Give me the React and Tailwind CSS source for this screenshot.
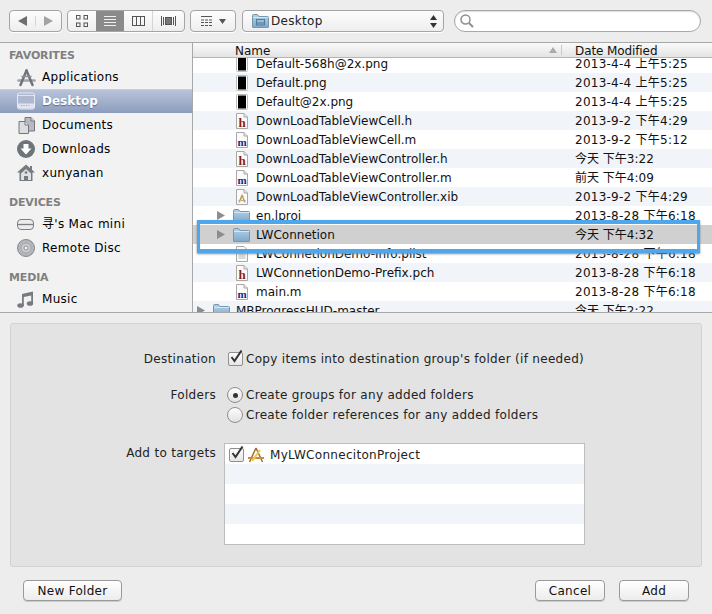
import React from "react";

const FONT = "font-['DejaVu_Sans','Noto_Sans_CJK_SC',sans-serif]";

function Folder({ className = "", glyph }) {
  return (
    <svg width="17" height="14" viewBox="0 0 17 14" className={className}>
      <defs>
        <linearGradient id="fg" x1="0" y1="0" x2="0" y2="1">
          <stop offset="0" stopColor="#b4d0e6" />
          <stop offset="1" stopColor="#7ea9cb" />
        </linearGradient>
      </defs>
      <path d="M.5 13V1.500a1 1 0 0 1 1-1h4l1.500 2h8.500a1 1 0 0 1 1 1V13a.5.5 0 0 1-.5.5H1a.5.5 0 0 1-.5-.5z" fill="url(#fg)" stroke="#7696ae" />
      <path d="M1 3.500h15" stroke="#d6e6f2" />
      {glyph && <rect x="4.500" y="5.500" width="8" height="5.500" fill="none" stroke="#527a9b" />}
      {glyph && <path d="M5 9h7" stroke="#527a9b" />}
    </svg>
  );
}

function Tri({ className = "" }) {
  return (
    <svg width="8" height="9" viewBox="0 0 8 9" className={className}>
      <path d="M0 0l8 4.500L0 9z" fill="#8c8c8c" />
    </svg>
  );
}

function PngIcon() {
  return (
    <svg width="12" height="16" viewBox="0 0 12 16">
      <rect x=".5" y=".5" width="11" height="15" rx="1" fill="#fff" stroke="#bbb" />
      <rect x="2" y="1.500" width="8" height="13" fill="#000" />
    </svg>
  );
}

function CodeIcon({ letter, color }) {
  return (
    <svg width="12" height="16" viewBox="0 0 12 16">
      <path d="M.5.500h7.500l3.500 3.500v11.500h-11z" fill="#fbfbfb" stroke="#a8a8a8" />
      <path d="M8 .5v3.500h3.500" fill="#e4e4e4" stroke="#a8a8a8" />
      <text x="6" y="13.500" textAnchor="middle" fontSize={letter === "m" ? "11" : "13"} fontWeight="700" fontFamily="'Liberation Serif',serif" fill={color}>{letter}</text>
    </svg>
  );
}

function XibIcon() {
  return (
    <svg width="12" height="16" viewBox="0 0 12 16">
      <path d="M.5.500h7.500l3.500 3.500v11.500h-11z" fill="#fbfbfb" stroke="#a8a8a8" />
      <path d="M8 .5v3.500h3.500" fill="#e4e4e4" stroke="#a8a8a8" />
      <path d="M3 13.500l3-7 3 7" fill="none" stroke="#b9905a" strokeWidth="1.300" />
      <path d="M2.500 11.500h7" stroke="#9ba8bd" />
      <path d="M3.500 13L8 7" stroke="#e7c65e" />
    </svg>
  );
}

function PlistIcon() {
  return (
    <svg width="12" height="16" viewBox="0 0 12 16">
      <path d="M.5.500h7.500l3.500 3.500v11.500h-11z" fill="#fbfbfb" stroke="#a8a8a8" />
      <path d="M2.500 6h7M2.500 8h7M2.500 10h7M2.500 12h7" stroke="#b5b5b5" />
    </svg>
  );
}

function Row({ icon, name, date, shade, indent = "pl-[43px]", textGap = "ml-[8px]", tri }) {
  return (
    <div className={`flex h-[19px] shrink-0 items-center ${shade ? "bg-[#f1f4f9]" : ""}`}>
      <div className="flex w-[382px] items-center">
        {tri ? (
          <div className={`flex items-center ${indent}`}>
            <Tri />
            <Folder className="ml-[8px]" />
          </div>
        ) : (
          <div className={`flex items-center ${indent}`}>{icon}</div>
        )}
        <span className={`${textGap} whitespace-nowrap`}>{name}</span>
      </div>
      <span className={`whitespace-nowrap ${date.startsWith("2013") ? "tracking-[0.25px]" : ""}`}>{date}</span>
    </div>
  );
}

function SideLabel({ children, className = "" }) {
  return <div className={`pl-[9px] text-[11px] font-bold leading-[14px] tracking-[-0.15px] text-[#808080] ${className}`}>{children}</div>;
}

function SideItem({ icon, children, active }) {
  return (
    <div
      className={`flex h-[24px] items-center pl-[17px] ${
        active
          ? "bg-linear-to-b from-[#bac5db] to-[#8c9dbd] font-bold text-white shadow-[inset_0_1px_0_#c3cde0] [text-shadow:0_1px_1px_#5d6d8c]"
          : "tracking-[0.3px] text-black"
      }`}
    >
      <div className="flex w-[25px] items-center">{icon}</div>
      <span className="whitespace-nowrap">{children}</span>
    </div>
  );
}

const ICONS = {
  apps: (
    <svg width="19" height="19" viewBox="0 0 19 19" fill="none" strokeLinecap="round">
      <path d="M1.500 12.500h16" stroke="#a0a3a8" strokeWidth="2.500" />
      <path d="M9.500 2.500L3.500 17" stroke="#70747a" strokeWidth="2.500" />
      <path d="M9.500 2.500l6 14.500" stroke="#70747a" strokeWidth="2.500" />
      <path d="M5 8.500h9" stroke="#8d9096" strokeWidth="1.500" />
    </svg>
  ),
  desk: (
    <svg width="18" height="18" viewBox="0 0 18 18">
      <rect x=".5" y="1" width="17" height="16" rx="2" fill="#aeb9d1" stroke="#e6eaf2" />
      <path d="M1 3.500h16" stroke="#dfe4ee" />
      <rect x="1" y="11.500" width="16" height="5" fill="#dfe4ee" />
      <path d="M4 13.500h1M6.500 13.500h1M9 13.500h1M11.500 13.500h1" stroke="#8c9dbd" />
    </svg>
  ),
  docs: (
    <svg width="19" height="19" viewBox="0 0 19 19">
      <path d="M8 1.500h6l3.500 3.500v10H8z" fill="#b8babf" stroke="#73767c" />
      <path d="M14 1.500V5h3.500" fill="#dcdde0" stroke="#73767c" />
      <path d="M2 5.500h6l3.500 3.500v8.500H2z" fill="#dcdde0" stroke="#73767c" />
      <path d="M8 5.500V9h3.500" fill="#f4f4f5" stroke="#73767c" />
    </svg>
  ),
  down: (
    <svg width="18" height="18" viewBox="0 0 18 18">
      <circle cx="9" cy="9" r="9" fill="#6f737a" />
      <path d="M6.500 4h5v4.500H14.500L9 14.500 3.500 8.500h3z" fill="#fff" />
    </svg>
  ),
  home: (
    <svg width="18" height="18" viewBox="0 0 18 18">
      <path d="M9 .500L0 8.500h2.500V17h13V8.500H18l-3-2.700V2h-2v2z" fill="#777b81" />
      <path d="M4 9.500L9 5l5 4.500V16h-3v-4H7v4H4z" fill="#dfe0e2" />
      <rect x="7.500" y="12" width="3" height="4" fill="#777b81" />
      <circle cx="9" cy="8.500" r="1.300" fill="#777b81" />
    </svg>
  ),
  mini: (
    <svg width="17" height="11" viewBox="0 0 17 11">
      <rect x=".5" y=".5" width="16" height="10" rx="3.500" fill="#ececec" stroke="#7c7f84" />
      <path d="M1 5.500h15" stroke="#7c7f84" strokeWidth="1.300" />
    </svg>
  ),
  disc: (
    <svg width="18" height="18" viewBox="0 0 18 18">
      <circle cx="9" cy="9" r="8.500" fill="#b4b6ba" stroke="#85888d" />
      <circle cx="9" cy="9" r="5" fill="#c9cbce" stroke="#a4a6aa" />
      <circle cx="9" cy="9" r="2" fill="#f3f3f3" stroke="#8f9196" />
    </svg>
  ),
  music: (
    <svg width="17" height="17" viewBox="0 0 17 17">
      <path d="M5 3l11-2.500v12h-1.800V4.400L6.800 6v9H5z" fill="#777b81" />
      <ellipse cx="3.500" cy="14.500" rx="3.200" ry="2.300" fill="#777b81" />
      <ellipse cx="13" cy="12.500" rx="3.200" ry="2.300" fill="#777b81" />
    </svg>
  ),
};

const btn = "rounded-[4px] border border-[#a5a5a5] bg-linear-to-b from-[#fdfdfd] to-[#eeeeee] shadow-[0_1px_0_#ffffff]";

function Toolbar() {
  return (
    <div className="flex h-[42px] shrink-0 items-start bg-[#ededed] pl-[9px] pt-[10px]">
      <div className={`flex h-[22px] w-[53px] items-center ${btn}`}>
        <div className="flex w-[26px] justify-center border-r border-[#d5d5d5]">
          <svg width="9" height="10" viewBox="0 0 9 10"><path d="M9 0v10L0 5z" fill="#6e6e6e" /></svg>
        </div>
        <div className="flex flex-1 justify-center">
          <svg width="9" height="10" viewBox="0 0 9 10"><path d="M0 0v10l9-5z" fill="#a3a3a3" /></svg>
        </div>
      </div>
      <div className={`ml-[5px] flex h-[22px] w-[118px] items-center overflow-hidden ${btn}`}>
        <div className="flex h-full w-[28px] items-center justify-center">
          <svg width="12" height="12" viewBox="0 0 12 12" fill="none" stroke="#555">
            <rect x=".5" y=".5" width="3.500" height="3.500" /><rect x="8" y=".5" width="3.500" height="3.500" />
            <rect x=".5" y="8" width="3.500" height="3.500" /><rect x="8" y="8" width="3.500" height="3.500" />
          </svg>
        </div>
        <div className="flex h-full w-[28px] items-center justify-center bg-[#8a8a8a]">
          <svg width="12" height="11" viewBox="0 0 12 11" stroke="#f0f0f0">
            <path d="M0 .5h12M0 3.500h12M0 6.500h12M0 9.500h12" />
          </svg>
        </div>
        <div className="flex h-full w-[28px] items-center justify-center">
          <svg width="13" height="10" viewBox="0 0 13 10" fill="none" stroke="#555">
            <rect x=".5" y=".5" width="12" height="9" /><path d="M4.500 0v10M8.500 0v10" />
          </svg>
        </div>
        <div className="flex h-full flex-1 items-center justify-center border-l border-[#d5d5d5]">
          <svg width="15" height="10" viewBox="0 0 15 10">
            <path d="M.5 0v10M2.500 1v8M12.500 1v8M14.500 0v10" stroke="#555" />
            <rect x="4.500" y="1.500" width="6" height="7" fill="#777" stroke="#555" />
          </svg>
        </div>
      </div>
      <div className={`ml-[5px] flex h-[22px] w-[46px] items-center justify-center gap-[7px] ${btn}`}>
        <svg width="11" height="10" viewBox="0 0 11 10" stroke="#555">
          <path d="M0 .5h11" /><path d="M0 4h3M4 4h3M8 4h3M0 6.500h3M4 6.500h3M8 6.500h3M0 9.500h3M4 9.500h3M8 9.500h3" />
        </svg>
        <svg width="7" height="5" viewBox="0 0 7 5"><path d="M0 0h7L3.500 5z" fill="#555" /></svg>
      </div>
      <div className={`ml-[6px] flex h-[22px] w-[202px] items-center pl-[9px] ${btn}`}>
        <Folder glyph />
        <span className="ml-[2px] text-[12px] tracking-[0.3px] text-[#222]">Desktop</span>
        <svg width="7" height="13" viewBox="0 0 7 13" className="ml-auto mr-[6px]">
          <path d="M3.500 0L7 5H0zM0 8h7l-3.500 5z" fill="#333" />
        </svg>
      </div>
      <div className="ml-[10px] flex h-[22px] w-[247px] items-center rounded-full border border-[#a8a8a8] bg-white pl-[5px] shadow-[inset_0_1px_1px_#dddddd]">
        <svg width="14" height="14" viewBox="0 0 14 14" fill="none" stroke="#8f8f8f" strokeWidth="1.500">
          <circle cx="5.500" cy="5.500" r="4.500" /><path d="M9 9l4 4" strokeWidth="2" />
        </svg>
      </div>
    </div>
  );
}

function Sidebar() {
  return (
    <div className="w-[193px] shrink-0 overflow-hidden border-r border-[#a8a8a8] bg-[#f2f2f2] pt-[6px] text-[12px]">
      <SideLabel className="mb-[2px]">FAVORITES</SideLabel>
      <SideItem icon={ICONS.apps}>Applications</SideItem>
      <SideItem icon={ICONS.desk} active>Desktop</SideItem>
      <SideItem icon={ICONS.docs}>Documents</SideItem>
      <SideItem icon={ICONS.down}>Downloads</SideItem>
      <SideItem icon={ICONS.home}>xunyanan</SideItem>
      <SideLabel className="mb-[2px] mt-[11px]">DEVICES</SideLabel>
      <SideItem icon={ICONS.mini}>寻's Mac mini</SideItem>
      <SideItem icon={ICONS.disc}>Remote Disc</SideItem>
      <SideLabel className="mb-[2px] mt-[11px]">MEDIA</SideLabel>
      <SideItem icon={ICONS.music}>Music</SideItem>
    </div>
  );
}

function FileList() {
  const h = <CodeIcon letter="h" color="#8a1c1c" />;
  const m = <CodeIcon letter="m" color="#1f1f8f" />;
  const p = <PngIcon />;
  return (
    <div className="flex min-w-0 flex-1 flex-col overflow-hidden bg-white text-[12px] text-[#111]">
      <div className="relative z-10 flex h-[15px] shrink-0 items-center border-b border-[#b5b5b5] bg-linear-to-b from-[#fafafa] to-[#e4e4e4] pt-[1px]">
        <span className="ml-[42px] w-[340px]">Name</span>
        <span className="tracking-[-0.1px]">Date Modified</span>
        <div className="absolute left-[356px] top-[2px] flex items-center gap-[4px]">
          <svg width="8" height="6" viewBox="0 0 8 6"><path d="M4 0l4 6H0z" fill="#aaa" /></svg>
          <div className="h-[10px] w-px bg-[#c8c8c8]" />
        </div>
      </div>
      <div className="-mt-[4px] flex flex-col">
        <Row icon={p} name="Default-568h@2x.png" date="2013-4-4 上午5:25" />
        <Row icon={p} name="Default.png" date="2013-4-4 上午5:25" shade />
        <Row icon={p} name="Default@2x.png" date="2013-4-4 上午5:25" />
        <Row icon={h} name="DownLoadTableViewCell.h" date="2013-9-2 下午4:29" shade />
        <Row icon={m} name="DownLoadTableViewCell.m" date="2013-9-2 下午5:12" />
        <Row icon={h} name="DownLoadTableViewController.h" date="今天 下午3:22" shade />
        <Row icon={m} name="DownLoadTableViewController.m" date="前天 下午4:09" />
        <Row icon={<XibIcon />} name="DownLoadTableViewController.xib" date="2013-9-2 下午4:29" shade />
        <Row tri indent="pl-[24px]" textGap="ml-[6px]" name="en.lproj" date="2013-8-28 下午6:18" />
        <div className="bg-[#d0d0d0]">
          <Row tri indent="pl-[24px]" textGap="ml-[6px]" name="LWConnetion" date="今天 下午4:32" />
        </div>
        <Row icon={<PlistIcon />} name="LWConnetionDemo-Info.plist" date="2013-8-28 下午6:18" />
        <Row icon={h} name="LWConnetionDemo-Prefix.pch" date="2013-8-28 下午6:18" shade />
        <Row icon={m} name="main.m" date="2013-8-28 下午6:18" />
        <Row tri indent="pl-[4px]" textGap="ml-[6px]" name="MBProgressHUD-master" date="今天 下午2:22" shade />
      </div>
    </div>
  );
}

function Check({ className = "" }) {
  return (
    <div className={`relative h-[14px] w-[15px] rounded-[2px] border border-[#8f8f8f] bg-linear-to-b from-[#fdfdfd] to-[#e6e6e6] ${className}`}>
      <svg width="15" height="15" viewBox="0 0 15 15" className="absolute -top-[4px] left-0" fill="none" stroke="#333" strokeWidth="2">
        <path d="M2.500 8l3 4L12.500 1.500" />
      </svg>
    </div>
  );
}

function Radio({ on }) {
  return (
    <div className="flex h-[16px] w-[16px] items-center justify-center rounded-full border border-[#8f8f8f] bg-linear-to-b from-[#fdfdfd] to-[#e2e2e2]">
      {on && <div className="h-[5px] w-[5px] rounded-full bg-[#333]" />}
    </div>
  );
}

function Options() {
  return (
    <div className="mx-[10px] mt-[10px] h-[244px] rounded-[3px] border border-[#d2d2d2] bg-[#e3e3e3] pt-[25px] text-[12px] tracking-[0.3px] text-[#222]">
      <div className="flex h-[20px] items-center">
        <span className="w-[205px] text-right">Destination</span>
        <Check className="ml-[12px]" />
        <span className="ml-[3px]">Copy items into destination group's folder (if needed)</span>
      </div>
      <div className="mt-[16px] flex h-[20px] items-center">
        <span className="w-[205px] text-right">Folders</span>
        <div className="ml-[11px]"><Radio on /></div>
        <span className="ml-[3px]">Create groups for any added folders</span>
      </div>
      <div className="flex h-[20px] items-center">
        <span className="w-[205px]" />
        <div className="ml-[11px]"><Radio /></div>
        <span className="ml-[3px]">Create folder references for any added folders</span>
      </div>
      <div className="mt-[18px] flex">
        <span className="w-[205px] text-right leading-[20px]">Add to targets</span>
        <div className="ml-[8px] h-[102px] w-[361px] border border-[#bdbdbd] bg-white">
          <div className="flex h-[20px] items-center pl-[4px] pt-[1px]">
            <Check />
            <svg width="18" height="16" viewBox="0 0 18 16" className="ml-[3px]">
              <path d="M9 1L2.500 15M9 1l6.500 14" stroke="#9c6b3a" strokeWidth="1.500" fill="none" />
              <path d="M1 11h16" stroke="#c78d3d" strokeWidth="2" />
              <path d="M5 14L13 3" stroke="#f0c94a" strokeWidth="2" />
            </svg>
            <span className="ml-[5px]">MyLWConnecitonProject</span>
          </div>
          <div className="h-[20px] bg-[#f1f4f9]" />
          <div className="h-[20px]" />
          <div className="h-[20px] bg-[#f1f4f9]" />
          <div className="h-[20px]" />
        </div>
      </div>
    </div>
  );
}

function Btn({ w, children, className = "" }) {
  return (
    <button className={`flex h-[21px] ${w} items-center justify-center rounded-[4px] border border-[#9a9a9a] bg-linear-to-b from-[#ffffff] to-[#ececec] text-[12px] tracking-[0.3px] text-[#111] shadow-[0_1px_0_#cccccc] ${className}`}>
      {children}
    </button>
  );
}

export default function App() {
  return (
    <div className={`relative flex h-[614px] w-[712px] flex-col overflow-hidden bg-[#ededed] ${FONT}`}>
      <Toolbar />
      <div className="flex h-[271px] shrink-0 border-y border-[#a8a8a8]">
        <Sidebar />
        <FileList />
      </div>
      <Options />
      <div className="mt-[13px] flex px-[23px]">
        <Btn w="w-[99px]">New Folder</Btn>
        <Btn w="w-[70px]" className="ml-auto">Cancel</Btn>
        <Btn w="w-[70px]" className="ml-[14px]">Add</Btn>
      </div>
      <div className="absolute left-[197px] top-[220px] h-[33px] w-[503px] border-[3px] border-b-[4px] border-t-[4px] border-[#4ea6ec] shadow-[0_1px_2px_#888888]" />
    </div>
  );
}
